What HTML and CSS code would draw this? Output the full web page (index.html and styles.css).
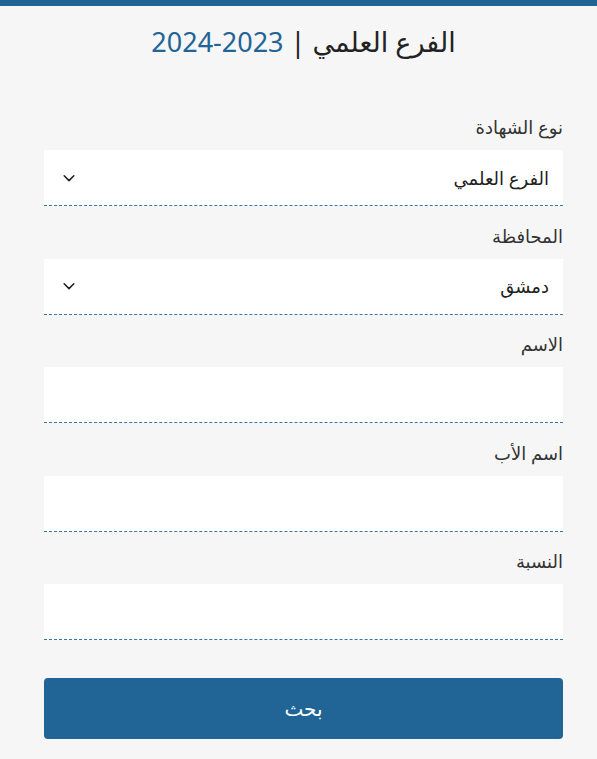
FILE: index.html
```html
<!DOCTYPE html>
<html lang="ar" dir="rtl">
<head>
	<meta charset="utf-8" />
	<title>نتائج الامتحانات</title>
	<link rel="stylesheet" href="styles.css">
</head>
<body>
	<div class="topBar"></div>

	<div class="page">
		<h1 class="title">الفرع العلمي | <span class="year">2023-2024</span></h1>

		<form class="searchForm">
			<label class="fieldLabel" for="type">نوع الشهادة</label>
			<div class="selectBox">
				<span class="selectText">الفرع العلمي</span>
				<svg class="chevron" width="14" height="14" viewBox="0 0 16 16"><path d="M2.5 5.5 8 11l5.5-5.5" fill="none" stroke="#222" stroke-width="1.8" stroke-linecap="round" stroke-linejoin="round"/></svg>
			</div>

			<label class="fieldLabel" for="city">المحافظة</label>
			<div class="selectBox">
				<span class="selectText">دمشق</span>
				<svg class="chevron" width="14" height="14" viewBox="0 0 16 16"><path d="M2.5 5.5 8 11l5.5-5.5" fill="none" stroke="#222" stroke-width="1.8" stroke-linecap="round" stroke-linejoin="round"/></svg>
			</div>

			<label class="fieldLabel" for="name">الاسم</label>
			<input type="text" id="name" class="inputText">

			<label class="fieldLabel" for="father">اسم الأب</label>
			<input type="text" id="father" class="inputText">

			<label class="fieldLabel" for="rate">النسبة</label>
			<input type="text" id="rate" class="inputText">

			<button type="button" class="buttonSearch">بحث</button>
		</form>
	</div>
</body>
</html>
```
FILE: styles.css
```css
body {
	margin: 0;
	background-color: #f6f6f6;
	font-family: 'Noto Sans', 'DejaVu Sans', sans-serif;
	color: #222;
}
.topBar {
	height: 6px;
	background-color: #216496;
}
.page {
	padding: 0 34px 0 44px;
}
.title {
	margin: 16px 0 0 0;
	height: 40px;
	text-align: center;
	font-size: 27px;
	font-weight: normal;
	line-height: 40px;
}
.year {
	color: #236496;
}
.searchForm {
	display: flex;
	flex-direction: column;
	padding-top: 54px;
}
.fieldLabel {
	height: 22px;
	line-height: 22px;
	font-size: 18px;
	color: #333;
	margin-bottom: 12px;
}
.selectBox,
.inputText {
	box-sizing: border-box;
	height: 56px;
	margin: 0 0 18.5px 0;
	background-color: #fff;
	border: 0;
	border-bottom: 1px dashed #3a75a8;
}
.selectBox {
	display: flex;
	align-items: center;
	justify-content: space-between;
	padding: 0 14px 0 18px;
}
.selectText {
	font-size: 18px;
}
.chevron {
	display: block;
}
.inputText {
	width: 100%;
	font-size: 18px;
	font-family: inherit;
	padding: 0 14px;
	outline: none;
}
.buttonSearch {
	height: 61px;
	margin-top: 19px;
	border: 0;
	border-radius: 4px;
	background-color: #216496;
	color: #fff;
	font-family: inherit;
	font-size: 20px;
}
```
